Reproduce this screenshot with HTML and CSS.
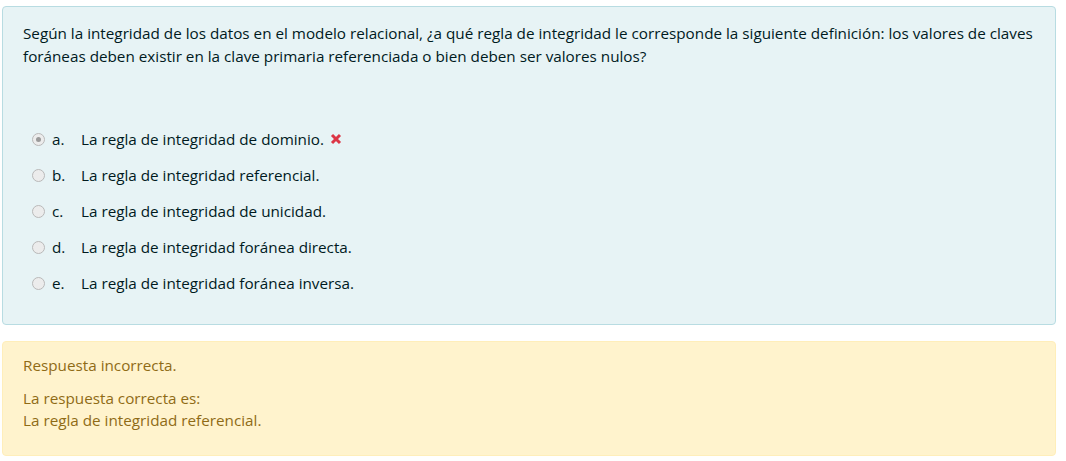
FILE: index.html
```html
<!DOCTYPE html>
<html lang="es">
<head>
<meta charset="utf-8">
<link rel="stylesheet" href="styles.css">
</head>
<body>
<div class="que">
  <div class="formulation">
    <p class="qtext">Según la integridad de los datos en el modelo relacional, ¿a qué regla de integridad le corresponde la siguiente definición: los valores de claves foráneas deben existir en la clave primaria referenciada o bien deben ser valores nulos?</p>
    <div class="answers">
      <div class="opt">
        <span class="radio checked"></span>
        <span class="letter">a.</span>
        <span class="label">La regla de integridad de dominio.</span>
        <svg class="xicon" viewBox="0 0 12 12" width="12" height="12"><path d="M2 2 L10 10 M10 2 L2 10" stroke="#dc3545" stroke-width="3" stroke-linecap="butt"/></svg>
      </div>
      <div class="opt">
        <span class="radio"></span>
        <span class="letter">b.</span>
        <span class="label">La regla de integridad referencial.</span>
      </div>
      <div class="opt">
        <span class="radio"></span>
        <span class="letter">c.</span>
        <span class="label">La regla de integridad de unicidad.</span>
      </div>
      <div class="opt">
        <span class="radio"></span>
        <span class="letter">d.</span>
        <span class="label">La regla de integridad foránea directa.</span>
      </div>
      <div class="opt">
        <span class="radio"></span>
        <span class="letter">e.</span>
        <span class="label">La regla de integridad foránea inversa.</span>
      </div>
    </div>
  </div>
  <div class="outcome">
    <p class="feedback">Respuesta incorrecta.</p>
    <p class="right">La respuesta correcta es:<br>La regla de integridad referencial.</p>
  </div>
</div>
</body>
</html>
```

FILE: styles.css
```css
* { box-sizing: border-box; }
html, body { margin: 0; padding: 0; background: #fff; }
body {
  font-family: "Open Sans", "Noto Sans", "Liberation Sans", sans-serif;
  font-size: 15.25px;
  line-height: 22.5px;
  color: #001a1e;
}
.que {
  padding: 6px 10px 0 2px;
  display: flex;
  flex-direction: column;
  gap: 16px;
}
.formulation {
  background: #e7f3f5;
  border: 1px solid #b8dce2;
  border-radius: 4px;
  padding: 15px 20px 30px 20px;
  height: 319px;
}
.qtext { margin: 0; }
.answers {
  margin-top: 61px;
  display: flex;
  flex-direction: column;
  gap: 13.5px;
}
.opt {
  display: flex;
  align-items: center;
  height: 22.5px;
  padding-left: 9px;
}
.radio {
  width: 13px;
  height: 13px;
  border-radius: 50%;
  border: 1px solid #b9b9b9;
  background: #ececec;
  position: relative;
  flex: none;
}
.radio.checked::after {
  content: "";
  position: absolute;
  left: 3px; top: 3px;
  width: 5px; height: 5px;
  border-radius: 50%;
  background: #9a9a9a;
}
.letter { margin-left: 7px; width: 29px; }
.xicon { margin-left: 6px; }
.outcome {
  background: #fff3cd;
  border: 1px solid #ffeeba;
  border-radius: 4px;
  padding: 12px 20px 14px 20px;
  height: 115px;
  color: #8f6b16;
}
.outcome p { margin: 0; }
.outcome .feedback { margin-bottom: 10px; }
```
